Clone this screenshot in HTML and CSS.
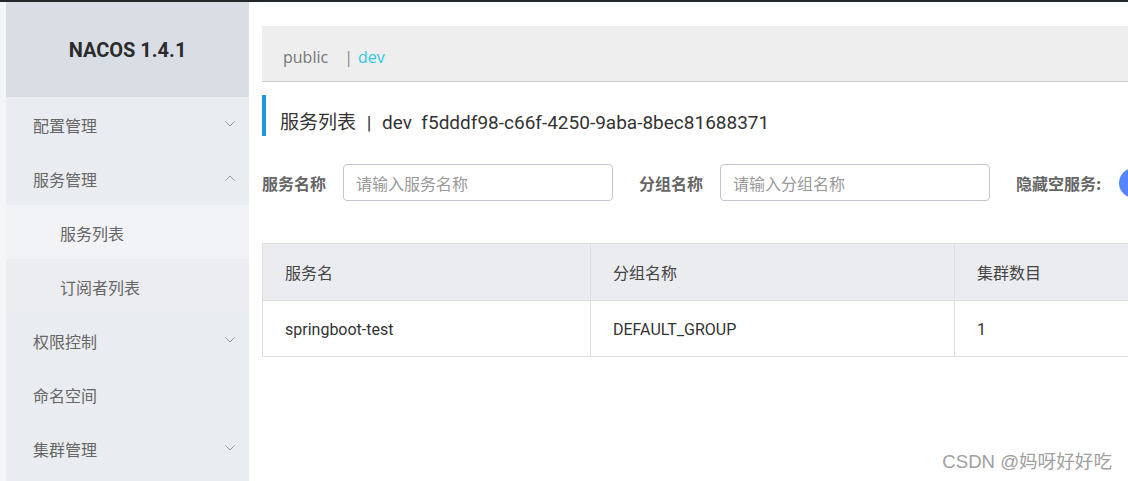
FILE: index.html
```html
<!DOCTYPE html>
<html lang="zh-CN">
<head>
<meta charset="utf-8">
<title>Nacos</title>
<link rel="stylesheet" href="styles.css">
</head>
<body>
<div class="topbar"></div>
<div class="layout">
  <div class="gutter"></div>
  <aside class="sidebar">
    <div class="brand">NACOS 1.4.1</div>
    <ul class="menu">
      <li class="menu-item"><span>配置管理</span><svg class="chev" viewBox="0 0 10 6"><path d="M0.5 0.5 L5 5 L9.5 0.5" /></svg></li>
      <li class="menu-item"><span>服务管理</span><svg class="chev" viewBox="0 0 10 6"><path d="M0.5 5.5 L5 1 L9.5 5.5" /></svg></li>
      <li class="menu-item sub active"><span>服务列表</span></li>
      <li class="menu-item sub"><span>订阅者列表</span></li>
      <li class="menu-item"><span>权限控制</span><svg class="chev" viewBox="0 0 10 6"><path d="M0.5 0.5 L5 5 L9.5 0.5" /></svg></li>
      <li class="menu-item"><span>命名空间</span></li>
      <li class="menu-item"><span>集群管理</span><svg class="chev" viewBox="0 0 10 6"><path d="M0.5 0.5 L5 5 L9.5 0.5" /></svg></li>
    </ul>
  </aside>
  <main class="main">
    <div class="ns-bar">
      <span class="ns">public</span>
      <span class="ns-sep">|</span>
      <span class="ns current">dev</span>
    </div>
    <h1 class="page-title">服务列表 <span class="title-sep">|</span> dev&nbsp; f5dddf98-c66f-4250-9aba-8bec81688371</h1>
    <div class="filters">
      <label class="f-label">服务名称</label>
      <div class="f-input">请输入服务名称</div>
      <label class="f-label gap">分组名称</label>
      <div class="f-input">请输入分组名称</div>
      <label class="f-label gap">隐藏空服务:</label>
      <div class="switch"></div>
    </div>
    <table class="grid">
      <colgroup><col class="c1"><col class="c2"><col class="c3"></colgroup>
      <thead>
        <tr><th>服务名</th><th>分组名称</th><th>集群数目</th></tr>
      </thead>
      <tbody>
        <tr><td>springboot-test</td><td>DEFAULT_GROUP</td><td>1</td></tr>
      </tbody>
    </table>
  </main>
</div>
<div class="watermark">CSDN @妈呀好好吃</div>
</body>
</html>
```

FILE: styles.css
```css
* { box-sizing: border-box; }
html, body {
  margin: 0;
  padding: 0;
  width: 1128px;
  height: 481px;
  overflow: hidden;
  background: #fff;
  font-family: Roboto, "Noto Sans CJK SC", sans-serif;
  color: #333;
}
.topbar {
  height: 2px;
  background: #25282b;
}
.layout {
  display: flex;
  height: 479px;
}
.gutter {
  width: 6px;
  background: #f4f5f6;
  flex: none;
}
.sidebar {
  width: 243px;
  flex: none;
  background: #e9ecf0;
}
.brand {
  height: 95px;
  background: #d9dee5;
  display: flex;
  align-items: center;
  justify-content: center;
  font-size: 20px;
  font-weight: 700;
  color: #2b2b2b;
}
.menu {
  list-style: none;
  margin: 0;
  padding: 0;
}
.menu-item {
  height: 54px;
  display: flex;
  align-items: center;
  justify-content: space-between;
  padding: 0 14px 0 27px;
  font-size: 16px;
  color: #666;
  font-family: "Noto Sans CJK SC", sans-serif;
}
.menu-item span { padding-top: 2px; }
.menu-item.sub { padding-left: 54px; background: #ebedf1; }
.menu-item.sub.active { background: #f2f3f7; }
.chev {
  width: 10px;
  height: 6px;
  fill: none;
  stroke: #9a9a9a;
  stroke-width: 1;
}
.main {
  flex: 1;
  min-width: 0;
  overflow: hidden;
  padding: 24px 0 0 13px;
}
.ns-bar {
  height: 56px;
  background: #eeeeee;
  border-bottom: 1px solid #cccccc;
  display: flex;
  align-items: center;
  padding: 6px 0 0 21px;
  font-size: 16px;
  font-family: "Open Sans", Roboto, sans-serif;
}
.ns { color: #777; }
.ns-sep { color: #888; margin-left: 16px; margin-right: 5px; }
.ns.current { color: #33c8e6; }
.page-title {
  margin: 13px 0 0 0;
  height: 41px;
  border-left: 4px solid #2199d4;
  padding-left: 14px;
  font-size: 19px;
  font-weight: 400;
  line-height: 55px;
  color: #333;
  white-space: nowrap;
}
.title-sep { margin: 0 6px; }
.filters {
  display: flex;
  align-items: center;
  margin-top: 28px;
  height: 37px;
  white-space: nowrap;
}
.f-label {
  font-size: 16px;
  font-weight: 700;
  color: #666;
  font-family: "Noto Sans CJK SC", sans-serif;
  margin-right: 17px;
}
.f-label.gap { margin-left: 26px; }
.f-input {
  width: 270px;
  height: 37px;
  border: 1px solid #c4c6cf;
  border-radius: 4px;
  padding-left: 12px;
  display: flex;
  align-items: center;
  font-size: 16px;
  color: #999;
  font-family: "Noto Sans CJK SC", sans-serif;
  flex: none;
}
.switch {
  width: 58px;
  height: 30px;
  border-radius: 15px;
  background: #5584ff;
  flex: none;
  margin-left: 1px;
}
.grid {
  margin-top: 42px;
  border-collapse: collapse;
  table-layout: fixed;
  width: 1300px;
  font-size: 16px;
}
.c1 { width: 328px; }
.c2 { width: 364px; }
.c3 { width: 608px; }
.grid th, .grid td {
  border: 1px solid #dcdee3;
  text-align: left;
  padding: 0 22px;
  font-weight: 400;
  color: #333;
}
.grid th {
  height: 57px;
  background: #ebecf0;
  font-family: "Noto Sans CJK SC", sans-serif;
  color: #444;
}
.grid td { height: 56px; padding-top: 2px; }
.watermark {
  position: absolute;
  right: 16px;
  bottom: 8px;
  font-family: "Liberation Sans", "Noto Sans CJK SC", sans-serif;
  font-size: 18.6px;
  color: #a0a0a0;
  text-shadow: 0 0 1px #fff;
}
```
